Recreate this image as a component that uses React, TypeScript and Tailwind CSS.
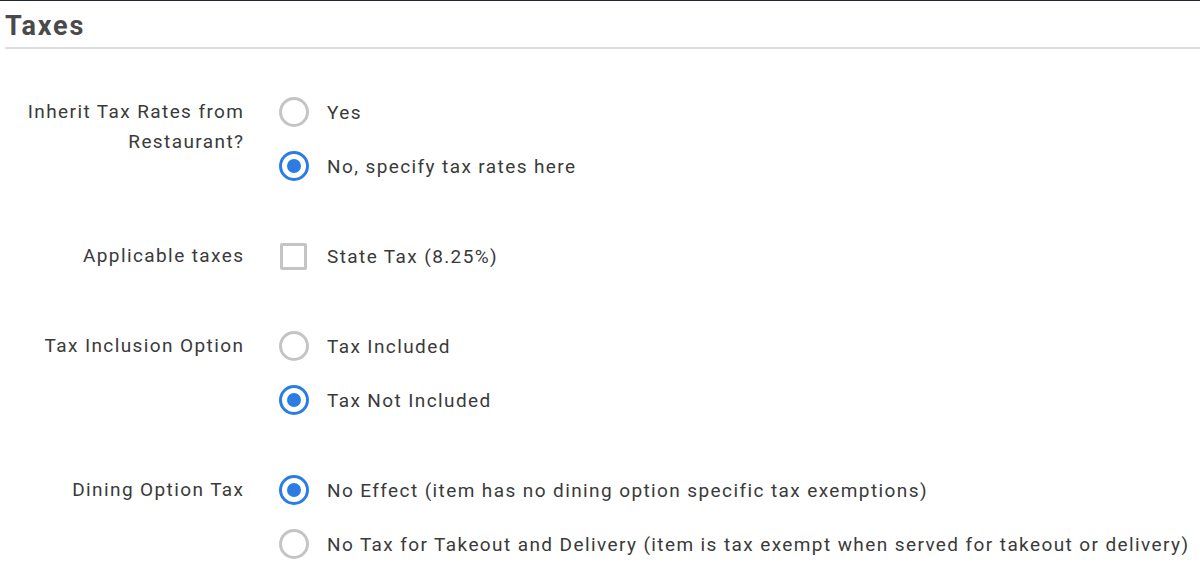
const groups = [
  {
    label: ["Inherit Tax Rates from", "Restaurant?"],
    type: "radio",
    options: [
      { text: "Yes", checked: false },
      { text: "No, specify tax rates here", checked: true },
    ],
  },
  {
    label: ["Applicable taxes"],
    type: "checkbox",
    options: [{ text: "State Tax (8.25%)", checked: false }],
  },
  {
    label: ["Tax Inclusion Option"],
    type: "radio",
    options: [
      { text: "Tax Included", checked: false },
      { text: "Tax Not Included", checked: true },
    ],
  },
  {
    label: ["Dining Option Tax"],
    type: "radio",
    options: [
      { text: "No Effect (item has no dining option specific tax exemptions)", checked: true },
      { text: "No Tax for Takeout and Delivery (item is tax exempt when served for takeout or delivery)", checked: false },
    ],
  },
]

function Radio({ checked }: { checked: boolean }) {
  return checked ? (
    <span className="w-[30px] h-[30px] rounded-full border-[3px] border-[#2b7de1] flex items-center justify-center shrink-0">
      <span className="w-[14px] h-[14px] rounded-full bg-[#2b7de1]" />
    </span>
  ) : (
    <span className="w-[30px] h-[30px] rounded-full border-[3px] border-[#c4c4c4] shrink-0" />
  )
}

function Checkbox() {
  return <span className="w-[27px] h-[27px] rounded-[2px] border-[3px] border-[#c4c4c4] shrink-0 ml-[1px] mr-[2px]" />
}

export default function App() {
  return (
    <div className="w-[1200px] h-[574px] bg-white border-t border-[#1f2533] font-['Roboto',sans-serif] text-[#3a3a3a] overflow-hidden">
      <div className="pl-[5px]">
        <h2 className="pt-[10px] pb-[6px] text-[27px] leading-[30px] font-bold tracking-[1.8px] text-[#4a4a4a] border-b-2 border-[#dcdce4]">
          Taxes
        </h2>
      </div>

      <div className="mt-[48px] flex flex-col gap-[60px] text-[19px] tracking-[1.4px]">
        {groups.map((group) => (
          <div key={group.label[0]} className="flex">
            <div className="w-[243px] shrink-0 text-right leading-[30px]">
              {group.label.map((line) => (
                <div key={line} className="-mr-[1.4px]">{line}</div>
              ))}
            </div>
            <div className="pl-[36px] flex flex-col gap-[24px]">
              {group.options.map((opt) => (
                <div key={opt.text} className="flex items-center h-[30px] gap-[18px]">
                  {group.type === "radio" ? <Radio checked={opt.checked} /> : <Checkbox />}
                  <span className="whitespace-nowrap pt-[2px]">{opt.text}</span>
                </div>
              ))}
            </div>
          </div>
        ))}
      </div>
    </div>
  )
}
